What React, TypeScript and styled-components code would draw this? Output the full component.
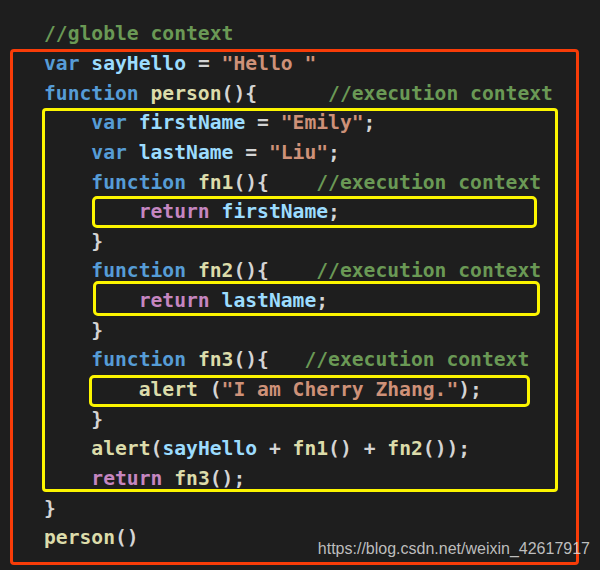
import React from "react";
import styled, { createGlobalStyle } from "styled-components";

const LINE = 29.65;

const Global = createGlobalStyle`
  html, body {
    margin: 0;
    padding: 0;
    background: #1e1e1e;
  }
`;

const Page = styled.div`
  position: relative;
  width: 600px;
  height: 570px;
  overflow: hidden;
  background: #1e1e1e;
`;

const Code = styled.div`
  display: flex;
  flex-direction: column;
  align-items: flex-start;
  padding: 19.3px 0 0 44px;
  font-family: "DejaVu Sans Mono", "Liberation Mono", monospace;
  font-weight: bold;
  font-size: 19.67px;
  color: #d4d4d4;
`;

const Line = styled.div`
  height: ${LINE}px;
  line-height: ${LINE}px;
  white-space: pre;
`;

type Tone = "kw" | "id" | "str" | "fn" | "cm" | "rt" | "p";
const toneColor: Record<Tone, string> = {
  kw: "#569cd6",
  id: "#9cdcfe",
  str: "#ce9178",
  fn: "#dcdcaa",
  cm: "#6a9955",
  rt: "#c586c0",
  p: "#d4d4d4",
};

const T = styled.span<{ $t: Tone }>`
  color: ${(p) => toneColor[p.$t]};
`;

const BW = 3;

type FrameProps = {
  $x: number;
  $w: number;
  $dt: number;
  $db: number;
  $color: string;
  $radius: number;
};

const Frame = styled.div<FrameProps>`
  box-sizing: border-box;
  flex: none;
  width: ${(p) => p.$w}px;
  margin: ${(p) => p.$dt}px 0 ${(p) => -p.$db}px ${(p) => p.$x}px;
  border: ${BW}px solid ${(p) => p.$color};
  border-radius: ${(p) => p.$radius}px;
  display: flex;
  flex-direction: column;
`;

const FrameBody = styled.div<{ $x: number; $dt: number; $db: number }>`
  display: flex;
  flex-direction: column;
  align-items: flex-start;
  margin: ${(p) => -p.$dt - BW}px 0 ${(p) => p.$db - BW}px
    ${(p) => -p.$x - BW}px;
`;

const RED = "#f83c08";
const YELLOW = "#fcf500";

type BoxSpec = { x: number; w: number; dt: number; db: number };

const Box: React.FC<{
  spec: BoxSpec;
  color: string;
  radius: number;
  children: React.ReactNode;
}> = ({ spec, color, radius, children }) => (
  <Frame
    $x={spec.x}
    $w={spec.w}
    $dt={spec.dt}
    $db={spec.db}
    $color={color}
    $radius={radius}
  >
    <FrameBody $x={spec.x} $dt={spec.dt} $db={spec.db}>
      {children}
    </FrameBody>
  </Frame>
);

const Watermark = styled.div`
  position: absolute;
  right: 10px;
  top: 540px;
  font-family: "Liberation Sans", Arial, sans-serif;
  font-size: 16px;
  color: rgba(220, 220, 220, 0.85);
  white-space: nowrap;
`;

const outer: BoxSpec = { x: -34, w: 569, dt: 0, db: 11.9 };
const mid: BoxSpec = { x: -2.3, w: 516.6, dt: 0, db: -1.2 };
const boxA: BoxSpec = { x: 47.7, w: 445, dt: -0.7, db: 1.65 };
const boxB: BoxSpec = { x: 49.3, w: 446.7, dt: -4.65, db: 0 };
const boxC: BoxSpec = { x: 45.3, w: 440.7, dt: -0.3, db: 2.35 };

export default function App() {
  return (
    <Page>
      <Global />
      <Code>
        <Line>
          <T $t="cm">//globle context</T>
        </Line>
        <Box spec={outer} color={RED} radius={4}>
          <Line>
            <T $t="kw">var</T> <T $t="id">sayHello</T> <T $t="p">=</T>{" "}
            <T $t="str">"Hello "</T>
          </Line>
          <Line>
            <T $t="kw">function</T> <T $t="fn">person</T>
            <T $t="p">(){"{"}</T>
            {"      "}
            <T $t="cm">//execution context</T>
          </Line>
          <Box spec={mid} color={YELLOW} radius={4}>
            <Line>
              {"    "}
              <T $t="kw">var</T> <T $t="id">firstName</T> <T $t="p">=</T>{" "}
              <T $t="str">"Emily"</T>
              <T $t="p">;</T>
            </Line>
            <Line>
              {"    "}
              <T $t="kw">var</T> <T $t="id">lastName</T> <T $t="p">=</T>{" "}
              <T $t="str">"Liu"</T>
              <T $t="p">;</T>
            </Line>
            <Line>
              {"    "}
              <T $t="kw">function</T> <T $t="fn">fn1</T>
              <T $t="p">(){"{"}</T>
              {"    "}
              <T $t="cm">//execution context</T>
            </Line>
            <Box spec={boxA} color={YELLOW} radius={5}>
              <Line>
                {"        "}
                <T $t="rt">return</T> <T $t="id">firstName</T>
                <T $t="p">;</T>
              </Line>
            </Box>
            <Line>
              {"    "}
              <T $t="p">{"}"}</T>
            </Line>
            <Line>
              {"    "}
              <T $t="kw">function</T> <T $t="fn">fn2</T>
              <T $t="p">(){"{"}</T>
              {"    "}
              <T $t="cm">//execution context</T>
            </Line>
            <Box spec={boxB} color={YELLOW} radius={5}>
              <Line>
                {"        "}
                <T $t="rt">return</T> <T $t="id">lastName</T>
                <T $t="p">;</T>
              </Line>
            </Box>
            <Line>
              {"    "}
              <T $t="p">{"}"}</T>
            </Line>
            <Line>
              {"    "}
              <T $t="kw">function</T> <T $t="fn">fn3</T>
              <T $t="p">(){"{"}</T>
              {"   "}
              <T $t="cm">//execution context</T>
            </Line>
            <Box spec={boxC} color={YELLOW} radius={5}>
              <Line>
                {"        "}
                <T $t="fn">alert</T> <T $t="p">(</T>
                <T $t="str">"I am Cherry Zhang."</T>
                <T $t="p">);</T>
              </Line>
            </Box>
            <Line>
              {"    "}
              <T $t="p">{"}"}</T>
            </Line>
            <Line>
              {"    "}
              <T $t="fn">alert</T>
              <T $t="p">(</T>
              <T $t="id">sayHello</T> <T $t="p">+</T> <T $t="fn">fn1</T>
              <T $t="p">()</T> <T $t="p">+</T> <T $t="fn">fn2</T>
              <T $t="p">());</T>
            </Line>
            <Line>
              {"    "}
              <T $t="rt">return</T> <T $t="fn">fn3</T>
              <T $t="p">();</T>
            </Line>
          </Box>
          <Line>
            <T $t="p">{"}"}</T>
          </Line>
          <Line>
            <T $t="fn">person</T>
            <T $t="p">()</T>
          </Line>
        </Box>
      </Code>
      <Watermark>https://blog.csdn.net/weixin_42617917</Watermark>
    </Page>
  );
}
